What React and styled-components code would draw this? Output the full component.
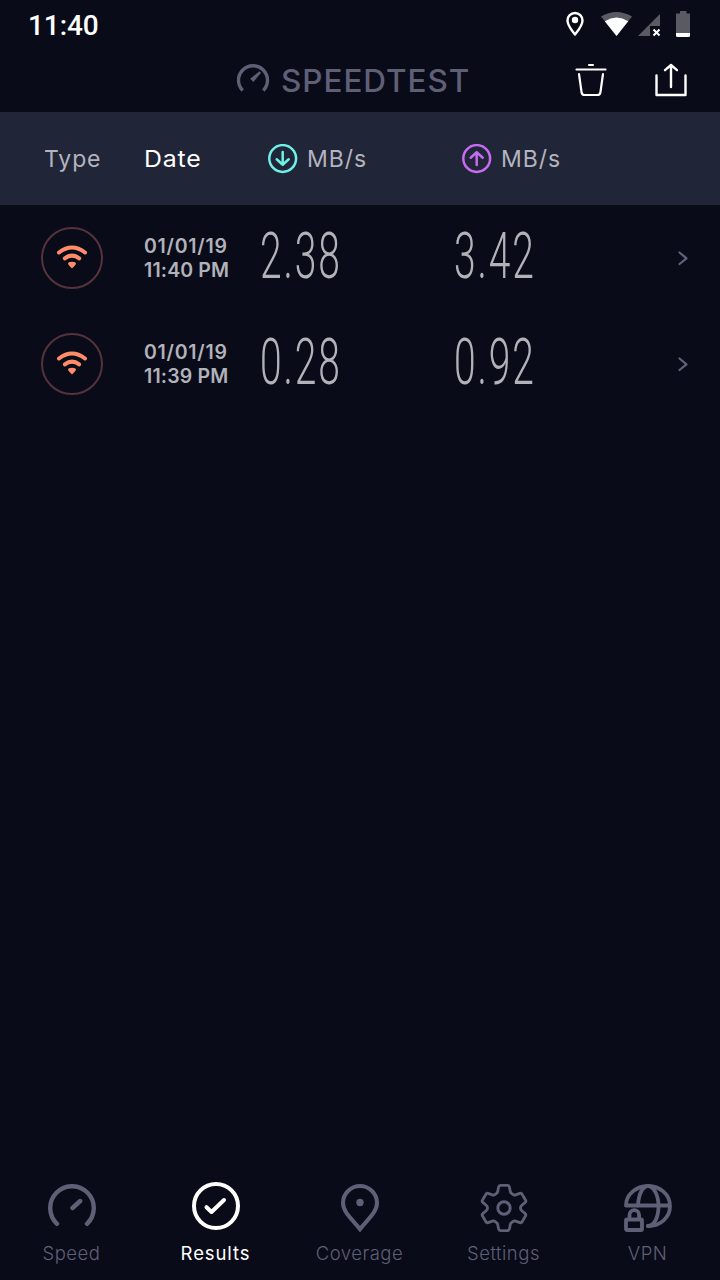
import React from "react";
import styled, { createGlobalStyle } from "styled-components";

const GlobalStyle = createGlobalStyle`
  * {
    box-sizing: border-box;
  }
  body {
    margin: 0;
    background: #090b19;
    font-family: Inter, "Liberation Sans", sans-serif;
  }
  svg {
    display: block;
    flex: none;
    fill: none;
    stroke-linecap: round;
    stroke-linejoin: round;
  }
`;

const Screen = styled.div`
  display: flex;
  flex-direction: column;
  width: 720px;
  height: 1280px;
  background: #090b19;
  overflow: hidden;
`;

const StatusBar = styled.div`
  display: flex;
  justify-content: space-between;
  height: 48px;
  padding: 0 28px 0 28px;
`;

const Clock = styled.div`
  font-family: Roboto, sans-serif;
  font-size: 28px;
  font-weight: 500;
  line-height: 51px;
  letter-spacing: -0.1px;
  color: #fff;
`;

const Header = styled.header`
  display: flex;
  align-items: center;
  height: 64px;
  padding: 0 33px 0 236px;
`;

const Brand = styled.h1`
  flex: 1;
  margin: 0 0 0 11px;
  padding-top: 2px;
  font-size: 31.5px;
  font-weight: 550;
  line-height: 62px;
  letter-spacing: 0.95px;
  color: #5f5f76;
`;

const Actions = styled.div`
  display: flex;
  gap: 48px;
`;

const columns = "144px 116px 194px 1fr";

const TableHead = styled.div`
  display: grid;
  grid-template-columns: ${columns};
  align-items: center;
  height: 93px;
  background: #212538;
`;

const HeadCell = styled.div`
  display: flex;
  align-items: center;
  gap: 9px;
  padding-left: ${({ $inset }) => $inset || 0}px;
  font-size: 23px;
  letter-spacing: ${({ $track }) => $track || 0}px;
  color: ${({ $active }) => ($active ? "#fff" : "#b3b4be")};
  transform: scaleX(${({ $stretch }) => $stretch || 1});
  transform-origin: left;
`;

const Row = styled.div`
  display: grid;
  grid-template-columns: ${columns} 45px;
  align-items: center;
  height: 106px;
`;

const TypeBadge = styled.div`
  display: flex;
  align-items: center;
  justify-content: center;
  width: 62px;
  height: 62px;
  margin-left: 41px;
  padding-bottom: 3px;
  border: 2px solid #56333b;
  border-radius: 50%;
`;

const Timestamp = styled.div`
  font-size: 19.5px;
  font-weight: 600;
  line-height: 24px;
  white-space: nowrap;
  color: #b2b2b9;
`;

const StampLine = styled.div`
  letter-spacing: ${({ $track }) => $track}px;
`;

const Reading = styled.div`
  width: max-content;
  padding-bottom: 3px;
  font-family: Roboto, sans-serif;
  font-size: 65px;
  font-weight: 300;
  line-height: 103px;
  letter-spacing: 3.2px;
  color: #b2b2b9;
  transform: scaleX(0.6);
  transform-origin: left;
`;

const TabBar = styled.nav`
  display: grid;
  grid-template-columns: repeat(5, 1fr);
  height: 100px;
  margin-top: auto;
`;

const Tab = styled.div`
  display: flex;
  flex-direction: column;
  align-items: center;
  padding-top: ${({ $active }) => ($active ? 2 : 4)}px;
  color: ${({ $active }) => ($active ? "#fff" : "#5f5f76")};
`;

const TabLabel = styled.span`
  margin-top: ${({ $active }) => ($active ? 11 : 9)}px;
  margin-right: 1px;
  font-size: 18.5px;
  font-weight: ${({ $active }) => ($active ? 400 : 300)};
  line-height: 24px;
  letter-spacing: ${({ $active }) => ($active ? 0.9 : 0.5)}px;
`;

const StatusIcons = () => (
  <svg width="130" height="48" viewBox="562 0 130 48">
    <path
      d="M575 34.500C571 29.500 567.500 25.500 567.500 20.500a7.500 7.500 0 0 1 15 0C582.500 25.500 579 29.500 575 34.500Z"
      stroke="#fff"
      strokeWidth="2.400"
    />
    <circle cx="575" cy="20" r="3.200" fill="#fff" />
    <path d="M601 16.500Q616.500 7.500 632 16.500L616.500 36Z" fill="#5a5a65" />
    <path d="M604.800 21.200Q616.500 14 628.200 21.200L616.500 36Z" fill="#fff" />
    <path d="M660 14V26H650V36H638Z" fill="#5a5a65" />
    <path d="M653.500 29.500l6 6M659.500 29.500l-6 6" stroke="#fff" strokeWidth="2" strokeLinecap="butt" />
    <path d="M680 11h6.500v2.500H690V33H676V13.500h4Z" fill="#5a5a65" />
    <path d="M676 33h14v2.500q0 1.500-1.500 1.500h-11q-1.500 0-1.500-1.500Z" fill="#fff" />
  </svg>
);

const LogoIcon = () => (
  <svg width="34" height="34" viewBox="0 0 34 34" stroke="#5f5f76" strokeWidth="3.400">
    <path d="M6.700 27.500A14.500 14.500 0 1 1 27.300 27.500" strokeLinecap="butt" />
    <path d="M14.200 15.800 23.500 8.300 25 9.800 17.400 19Z" fill="#5f5f76" stroke="none" />
  </svg>
);

const TrashIcon = () => (
  <svg width="32" height="34" viewBox="0 0 32 34" stroke="#fff" strokeWidth="2.200">
    <path d="M14 2h4M1.500 6.500h29M4 11l2.600 18.500q.4 2.500 3 2.500h12.800q2.600 0 3-2.500L28 11" />
  </svg>
);

const ShareIcon = () => (
  <svg width="32" height="34" viewBox="0 0 32 34" stroke="#fff" strokeWidth="2.400">
    <path d="M1.500 12.500V32h29V12.500M16 24V2M10 7.200 16 2l6 5.200" />
  </svg>
);

const ArrowIcon = ({ up }) => (
  <svg width="30" height="30" viewBox="0 0 30 30" stroke={up ? "#c56cf0" : "#6ff0e6"} strokeWidth="2.500">
    <circle cx="14.700" cy="14.500" r="13.400" />
    <path d={up ? "M14.700 21V8.500M8.700 13.700 14.700 8.300l6 5.400" : "M14.700 8V20.500M8.700 15.300 14.700 20.700l6-5.400"} />
  </svg>
);

const WifiIcon = () => (
  <svg width="32" height="26" viewBox="0 0 32 26" stroke="#ff8c69" strokeWidth="4">
    <path d="M3 8.500Q16-1.500 29 8.500" />
    <path d="M8.800 14.300Q16 9 23.200 14.300" />
    <path d="M12 20q0-2.200 4-2.200t4 2.200q-1.500 2.500-4 4.500-2.500-2-4-4.500Z" fill="#ff8c69" stroke="none" />
  </svg>
);

const ChevronIcon = () => (
  <svg width="14" height="16" viewBox="0 0 14 16" stroke="#62627a" strokeWidth="2.200">
    <path d="M4.500 2.500 11.500 8.300 4.500 14" />
  </svg>
);

const SpeedIcon = () => (
  <svg width="48" height="48" viewBox="0 0 48 48" stroke="currentColor" strokeWidth="4.400">
    <path d="M9 39.800A21.800 21.800 0 1 1 39 39.800M24.500 24 32.200 17" />
  </svg>
);

const ResultsIcon = () => (
  <svg width="48" height="48" viewBox="0 0 48 48" stroke="currentColor" strokeWidth="4">
    <circle cx="24" cy="24" r="22" />
    <path d="M14.500 25.200 19.500 30 32 18" />
  </svg>
);

const CoverageIcon = () => (
  <svg width="48" height="48" viewBox="0 0 48 48" stroke="currentColor" strokeWidth="4">
    <path d="M24 45.200C17 36 7 28.500 7 19a17 17 0 0 1 34 0C41 28.500 31 36 24 45.200Z" strokeLinejoin="miter" />
    <circle cx="24" cy="18.500" r="3.700" fill="currentColor" stroke="none" />
  </svg>
);

const SettingsIcon = () => (
  <svg width="48" height="48" viewBox="0 0 48 48" stroke="currentColor" strokeWidth="2.800">
    <path d="M20.500 1.400h7q1.600 0 1.900 1.500l1 5q.3 1.200 1.300 1.700l1.800 1.100q1 .6 2.100.2l4.300-1.500q1.500-.5 2.200.8l3.500 6q.7 1.300-.4 2.200l-3.600 3.100q-1 .8-1 1.800v1.400q0 1 1 1.800l3.600 3.100q1.100.9.400 2.200l-3.500 6q-.7 1.300-2.200.8l-4.300-1.500q-1.100-.4-2.100.2l-1.800 1.100q-1 .5-1.300 1.700l-1 5q-.3 1.500-1.900 1.500h-7q-1.600 0-1.900-1.500l-1-5q-.3-1.200-1.300-1.700l-1.800-1.100q-1-.6-2.100-.2l-4.300 1.500q-1.500.5-2.200-.8l-3.500-6q-.7-1.300.4-2.200l3.600-3.100q1-.8 1-1.800v-1.400q0-1-1-1.800l-3.600-3.100q-1.100-.9-.4-2.200l3.500-6q.7-1.300 2.200-.8l4.300 1.500q1.100.4 2.100-.2l1.800-1.100q1-.5 1.300-1.700l1-5q.3-1.500 1.900-1.500Z" />
    <circle cx="24" cy="24" r="6.200" strokeWidth="3" />
  </svg>
);

const VpnIcon = () => (
  <svg width="48" height="48" viewBox="0 0 48 48" stroke="currentColor" strokeWidth="3.800">
    <path d="M2 21.500C2 10.500 12 2 24 2s22 8.500 22 20-9.500 20-22 20M2 21.500h43.500" />
    <path d="M14 21.500C14.500 10.500 18.500 2 24 2s10.500 9 10.500 20S30.500 42 24 42" />
    <rect x="2" y="35.500" width="16" height="10.500" rx="1" />
    <path d="M5.500 35v-4a4.800 4.800 0 0 1 9.600 0v4" />
  </svg>
);

const results = [
  { date: "01/01/19", time: "11:40 PM", down: "2.38", up: "3.42" },
  { date: "01/01/19", time: "11:39 PM", down: "0.28", up: "0.92" },
];

const tabs = [
  { label: "Speed", Icon: SpeedIcon },
  { label: "Results", Icon: ResultsIcon, active: true },
  { label: "Coverage", Icon: CoverageIcon },
  { label: "Settings", Icon: SettingsIcon },
  { label: "VPN", Icon: VpnIcon },
];

const App = () => (
  <Screen>
    <GlobalStyle />
    <StatusBar>
      <Clock>11:40</Clock>
      <StatusIcons />
    </StatusBar>
    <Header>
      <LogoIcon />
      <Brand>SPEEDTEST</Brand>
      <Actions>
        <TrashIcon />
        <ShareIcon />
      </Actions>
    </Header>
    <TableHead>
      <HeadCell $inset={44} $track={0.9}>Type</HeadCell>
      <HeadCell $active $track={0.8} $stretch={1.08}>Date</HeadCell>
      <HeadCell $inset={8} $track={1}>
        <ArrowIcon />
        MB/s
      </HeadCell>
      <HeadCell $inset={8} $track={1}>
        <ArrowIcon up />
        MB/s
      </HeadCell>
    </TableHead>
    {results.map(({ date, time, down, up }) => (
      <Row key={time}>
        <TypeBadge>
          <WifiIcon />
        </TypeBadge>
        <Timestamp>
          <StampLine $track={0.75}>{date}</StampLine>
          <StampLine $track={0.15}>{time}</StampLine>
        </Timestamp>
        <Reading>{down}</Reading>
        <Reading>{up}</Reading>
        <ChevronIcon />
      </Row>
    ))}
    <TabBar>
      {tabs.map(({ label, Icon, active }) => (
        <Tab key={label} $active={active}>
          <Icon />
          <TabLabel $active={active}>{label}</TabLabel>
        </Tab>
      ))}
    </TabBar>
  </Screen>
);

export default App;
